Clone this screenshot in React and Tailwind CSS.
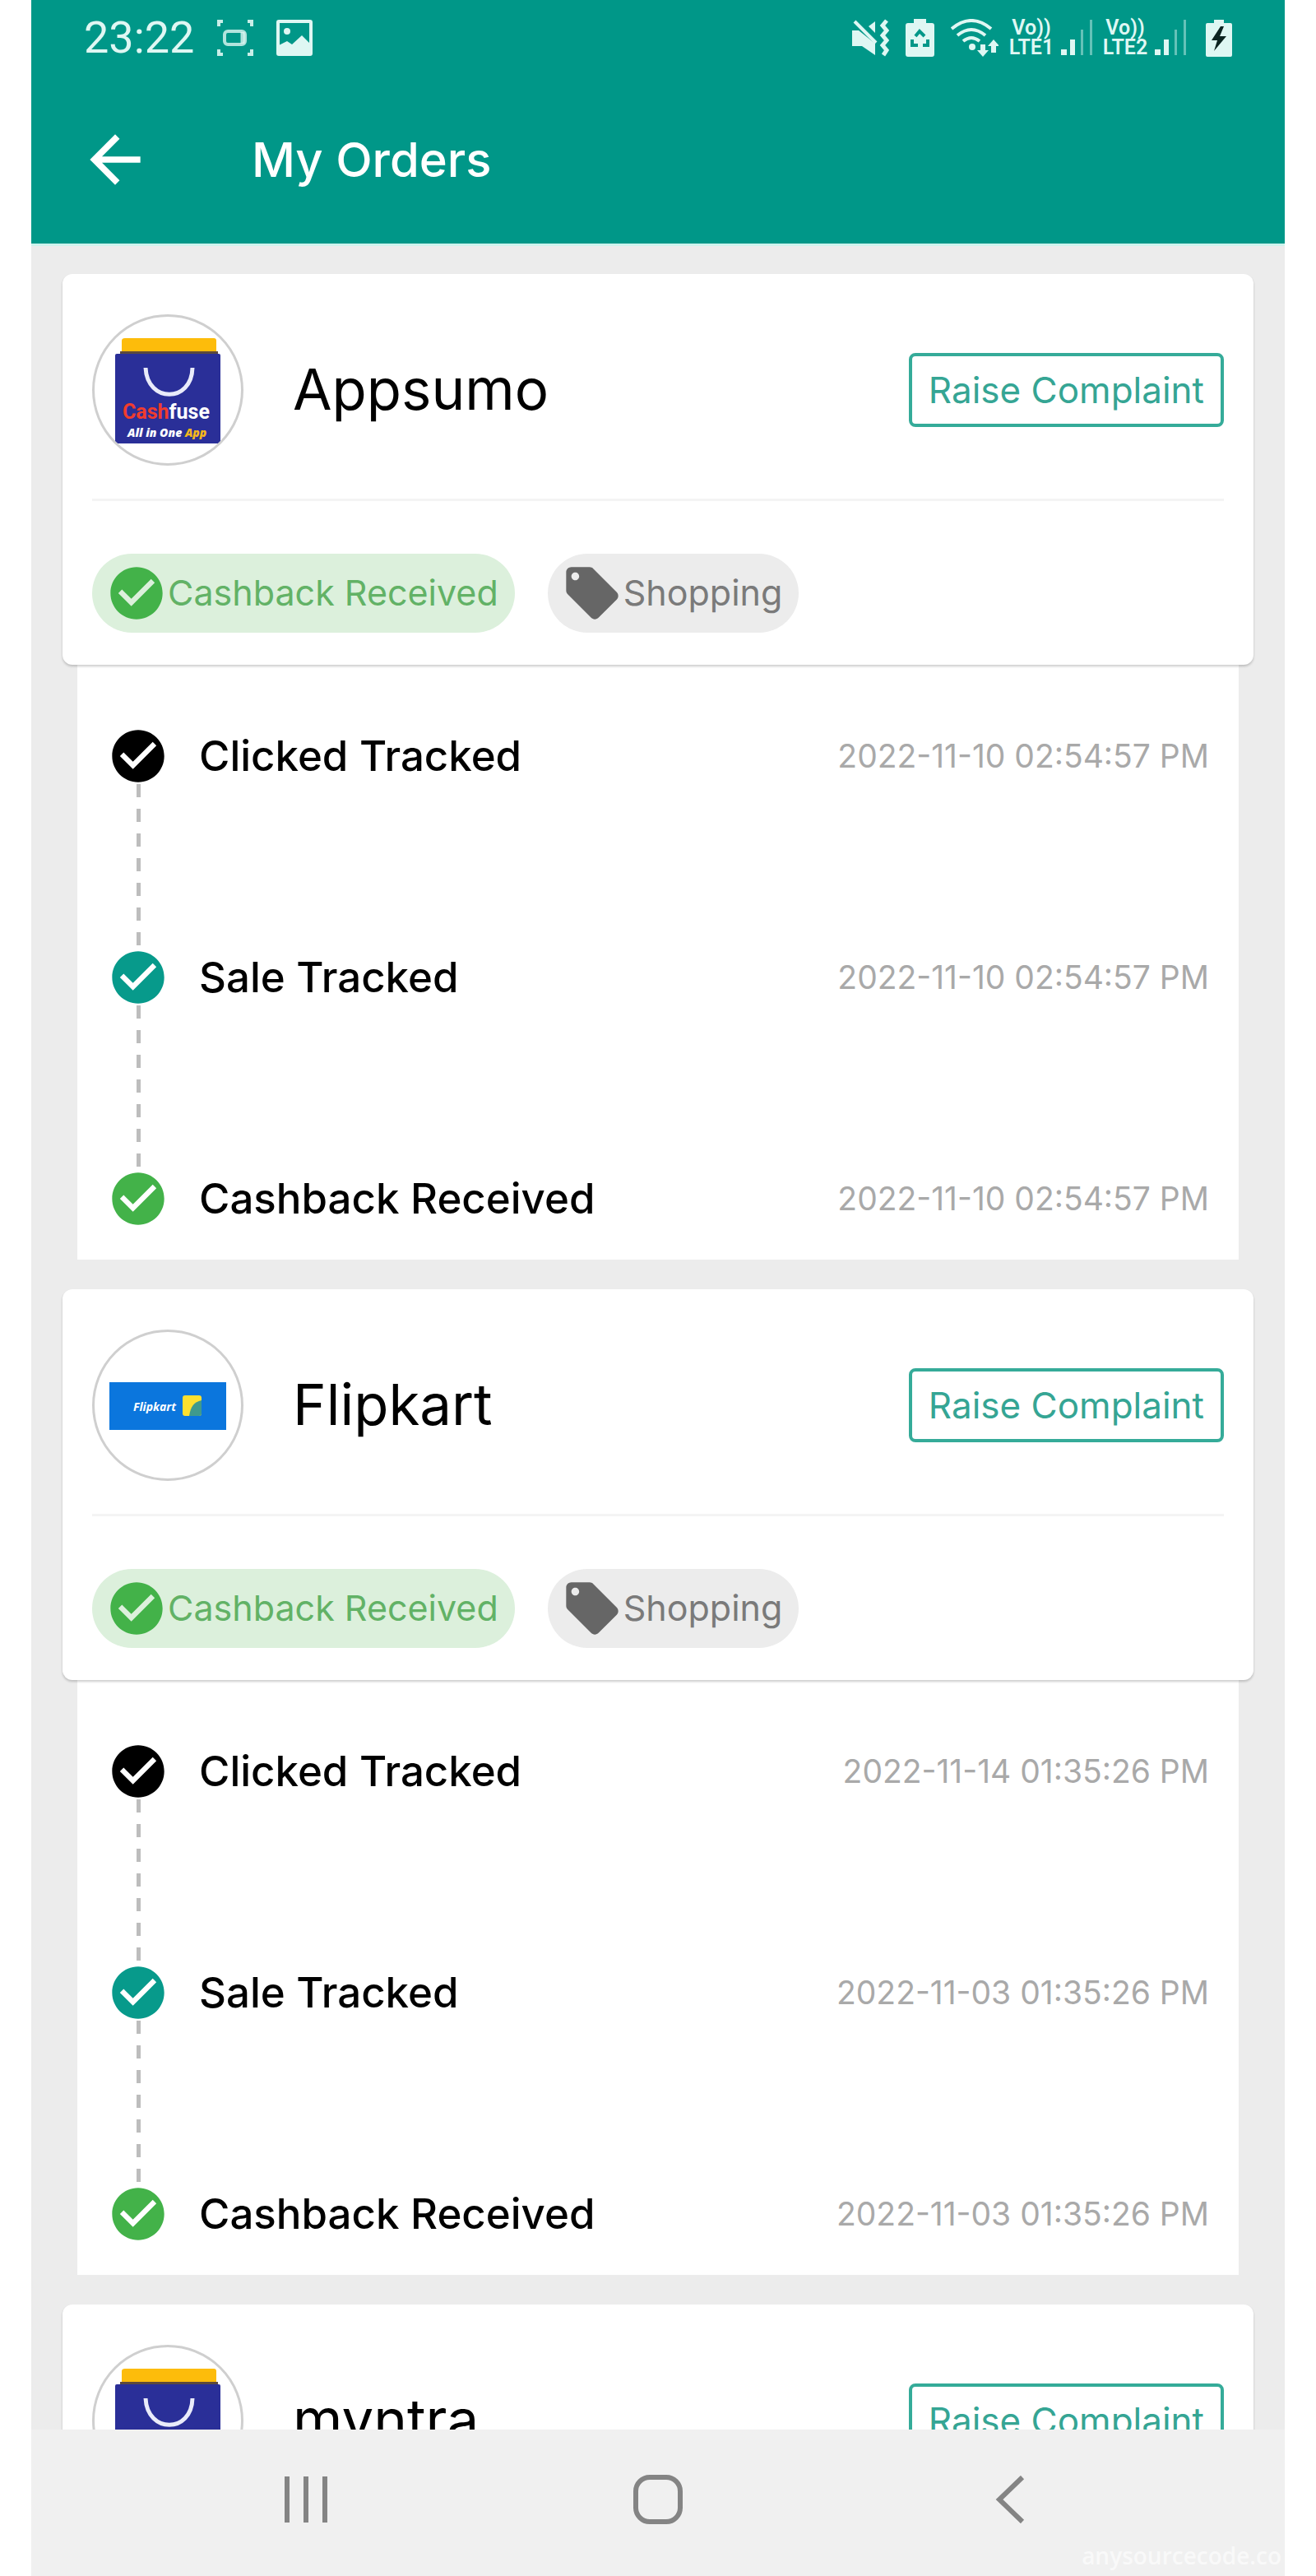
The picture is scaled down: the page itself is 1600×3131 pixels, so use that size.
import React from 'react';
import { MdCheckCircle, MdLocalOffer, MdArrowBack } from 'react-icons/md';

const ORDERS = [
  {
    name: 'Appsumo',
    logo: 'cashfuse',
    dates: ['2022-11-10 02:54:57 PM', '2022-11-10 02:54:57 PM', '2022-11-10 02:54:57 PM'],
  },
  {
    name: 'Flipkart',
    logo: 'flipkart',
    dates: ['2022-11-14 01:35:26 PM', '2022-11-03 01:35:26 PM', '2022-11-03 01:35:26 PM'],
  },
  { name: 'myntra', logo: 'cashfuse', dates: [] },
];

const STEPS = [
  { label: 'Clicked Tracked', color: 'text-black' },
  { label: 'Sale Tracked', color: 'text-[#079a8b]' },
  { label: 'Cashback Received', color: 'text-[#43b249]' },
];

const CashfuseLogo = () => (
  <svg viewBox="3 3 178 178" className="size-full" role="img" aria-label="Cashfuse">
    <path d="M40 29h108q3 0 3 3v14H36V32q0-3 4-3z" fill="#fdbc0b" />
    <path d="M34 45h119v4H34z" fill="#5d4a3c" />
    <rect x="28" y="48" width="128" height="109" rx="2" fill="#2a2f98" />
    <path d="M65 65c2 43 56 43 57 0" fill="none" stroke="#e9ebfa" strokeWidth="5" />
    <text x="37" y="127" fontSize="25" fontWeight="700" fontFamily="Roboto, sans-serif">
      <tspan fill="#f03c2e">Cash</tspan>
      <tspan fill="#fff">fuse</tspan>
    </text>
    <text x="43" y="149" fontSize="14" fontWeight="800" fontStyle="italic" fontFamily="Open Sans, sans-serif">
      <tspan fill="#fff">All in One </tspan>
      <tspan fill="#f5b81c">App</tspan>
    </text>
  </svg>
);

const FlipkartLogo = () => (
  <svg viewBox="3 3 178 178" className="size-full" role="img" aria-label="Flipkart">
    <rect x="21" y="64" width="142" height="58" fill="#0b76dd" />
    <text x="50" y="99" fontSize="14" fontWeight="700" fontStyle="italic" fontFamily="Open Sans, sans-serif" fill="#fff">
      Flipkart
    </text>
    <rect x="110" y="80" width="23" height="25" rx="3" fill="#fde02f" />
    <path d="M118 105c2-12 6-17 15-19v16q0 3-3 3z" fill="#3f9a8d" />
  </svg>
);

const CaptureIcon = () => (
  <svg viewBox="0 0 44 44" className="size-11" fill="none" stroke="currentColor" aria-hidden="true">
    <path d="M2 8V2h5M37 2h5v6M42 36v6h-5M7 42H2v-6" strokeWidth="4" opacity="0.9" />
    <rect x="9" y="14" width="25" height="16" rx="4" strokeWidth="4" opacity="0.8" />
    <path d="M31 15v14" strokeWidth="5" opacity="0.8" />
  </svg>
);

const PictureIcon = () => (
  <svg viewBox="0 0 44 44" className="size-11" aria-hidden="true">
    <rect x="2" y="2" width="40" height="40" rx="1" fill="none" stroke="currentColor" strokeWidth="4" />
    <circle cx="13" cy="14" r="4" fill="currentColor" />
    <path d="M3 42V31l10-5 6 4 12-11 11 11v12z" fill="currentColor" />
  </svg>
);

const MuteIcon = () => (
  <svg viewBox="0 0 45 46" className="h-[46px] w-[45px]" aria-hidden="true">
    <path d="M0 14h8L28 30v14L12 33H0z" fill="currentColor" />
    <path d="M20 9l8-6v14z" fill="currentColor" />
    <path d="M3 3l26 26" fill="none" stroke="currentColor" strokeWidth="4" />
    <path d="M42 2l-5 6 5 6-5 6 5 6-5 6 5 6-4 6" fill="none" stroke="currentColor" strokeWidth="5" />
  </svg>
);

const BatterySaverIcon = () => (
  <svg viewBox="0 0 35 46" className="h-[46px] w-[35px]" aria-hidden="true">
    <path d="M10 0h15v5h7q3 0 3 3v35q0 3-3 3H3q-3 0-3-3V8q0-3 3-3h7z" fill="currentColor" />
    <path d="M12 21l5-6 6 6M8 25v7h7M27 25v7h-6" fill="none" stroke="#009788" strokeWidth="4" />
  </svg>
);

const WifiIcon = () => (
  <svg viewBox="0 0 58 46" className="h-[46px] w-[58px]" aria-hidden="true">
    <g fill="none" stroke="currentColor" strokeWidth="4">
      <path d="M1 12q24-20 48 0" />
      <path d="M8 20q17-14 34 0" />
      <path d="M15 27q10-8 20 0" />
    </g>
    <circle cx="26" cy="34" r="4" fill="currentColor" />
    <path d="M36 31h6v7h4l-7 8-7-8h4zM49 41v-8h-4l7-8 7 8h-4v8z" fill="currentColor" />
  </svg>
);

const SignalBars = () => (
  <svg viewBox="0 0 42 44" className="h-11 w-[42px]" fill="currentColor" aria-hidden="true">
    <rect x="0" y="36" width="7" height="7" />
    <rect x="11" y="24" width="6" height="19" />
    <rect x="24" y="12" width="3" height="31" opacity="0.45" />
    <rect x="35" y="0" width="3" height="43" opacity="0.45" />
  </svg>
);

const ChargingIcon = () => (
  <svg viewBox="0 0 32 46" className="h-[46px] w-8" aria-hidden="true">
    <path d="M10 1h12v4h8q2 0 2 2v37q0 2-2 2H2q-2 0-2-2V7q0-2 2-2h8z" fill="currentColor" />
    <path d="M18 9L7 26h7l-4 13 15-18h-8l5-12z" fill="#0c2421" />
  </svg>
);

const VoLte = ({ sim }) => (
  <div className="flex items-center gap-2">
    <div className="w-14 text-center font-[Roboto,sans-serif] text-[25px] leading-6 font-semibold">
      <div>Vo))</div>
      <div>LTE{sim}</div>
    </div>
    <SignalBars />
  </div>
);

const StatusBar = () => (
  <div className="flex h-23 items-center justify-between pr-16 pl-16 text-[#dff7f3]">
    <div className="flex items-center gap-7">
      <span className="font-[Roboto,sans-serif] text-[54px] leading-none">23:22</span>
      <CaptureIcon />
      <PictureIcon />
    </div>
    <div className="flex items-center gap-5">
      <MuteIcon />
      <BatterySaverIcon />
      <WifiIcon />
      <div className="-ml-2 flex items-center gap-2">
        <VoLte sim={1} />
        <VoLte sim={2} />
      </div>
      <ChargingIcon />
    </div>
  </div>
);

const Timeline = ({ dates }) => (
  <ol className="mx-[18px] bg-white px-9 pt-[73px] pb-9">
    {dates.map((date, i) => (
      <li key={STEPS[i].label} className="group flex h-[269px] gap-9 last:h-19">
        <div className="flex flex-col items-center">
          <MdCheckCircle className={`size-19 shrink-0 ${STEPS[i].color}`} />
          <div className="-my-1 w-[5px] flex-1 bg-[repeating-linear-gradient(to_bottom,#bdbdbd_0_16px,transparent_16px_30px)] group-last:hidden" />
        </div>
        <div className="flex h-19 flex-1 items-center justify-between">
          <span className="text-[51px] font-medium text-black">{STEPS[i].label}</span>
          <time className="text-[39px] text-[#a9a9a9]">{date}</time>
        </div>
      </li>
    ))}
  </ol>
);

const OrderCard = ({ order }) => (
  <article className="shrink-0">
    <div className="relative rounded-xl bg-white px-9 shadow-[0_2px_3px_rgba(0,0,0,0.2)]">
      <div className="flex h-69 items-center border-b-3 border-[#f4f4f4] pt-2">
        <div className="size-46 shrink-0 overflow-hidden rounded-full border-3 border-[#cfcfcf]">
          {order.logo === 'cashfuse' ? <CashfuseLogo /> : <FlipkartLogo />}
        </div>
        <h2 className="ml-15 flex-1 text-[69px] leading-none text-black">{order.name}</h2>
        <button className="h-[90px] rounded-lg border-4 border-[#35ab99] px-5 text-[44px] leading-none text-[#35a594]">
          Raise Complaint
        </button>
      </div>
      <div className="flex h-[199px] items-center gap-10 pt-6">
        <span className="flex h-24 items-center rounded-full bg-[#dcf0dc] pr-5 pl-4 text-[43px] text-[#62b266]">
          <MdCheckCircle className="size-19 text-[#43b249]" />
          Cashback Received
        </span>
        <span className="flex h-24 items-center rounded-full bg-[#ececec] pr-5 pl-4 text-[43px] text-[#7a7a7a]">
          <MdLocalOffer className="size-19 text-[#666]" />
          Shopping
        </span>
      </div>
    </div>
    {order.dates.length > 0 && <Timeline dates={order.dates} />}
  </article>
);

const NavBar = () => (
  <nav className="relative grid h-[178px] shrink-0 grid-cols-3 place-items-center bg-[#f0f0f0] px-30 pb-2 text-[#848484]">
    <button aria-label="Recent apps">
      <svg viewBox="0 0 54 56" className="h-14 w-[54px]" fill="currentColor">
        <path d="M1 0h6v56H1zM24 0h6v56h-6zM47 0h6v56h-6z" />
      </svg>
    </button>
    <button aria-label="Home" className="size-15 rounded-[20px] border-6 border-current" />
    <button aria-label="Back">
      <svg viewBox="0 0 36 58" className="h-[58px] w-9" fill="none" stroke="currentColor" strokeWidth="6">
        <path d="M33 2L5 29l28 27" />
      </svg>
    </button>
    <span className="absolute right-1 bottom-1 font-['Open_Sans',sans-serif] text-[28px] font-semibold text-[#f9f9f9]">
      anysourcecode.co
    </span>
  </nav>
);

const App = () => {
  return (
    <div className="h-screen bg-white px-[38px] font-[Inter,sans-serif]">
      <div className="flex h-full flex-col">
        <header className="shrink-0 border-b-3 border-[#cdf3ed] bg-[#009788] bg-clip-padding text-white">
          <StatusBar />
          <div className="flex h-51 items-center px-14">
            <button aria-label="Back">
              <MdArrowBack className="size-23" />
            </button>
            <h1 className="ml-30 text-[58px] font-medium">My Orders</h1>
          </div>
        </header>
        <main className="flex min-h-0 flex-1 flex-col gap-9 overflow-hidden bg-[#ececec] px-[38px] pt-[34px]">
          {ORDERS.map((order) => (
            <OrderCard key={order.name} order={order} />
          ))}
        </main>
        <NavBar />
      </div>
    </div>
  );
};

export default App;
